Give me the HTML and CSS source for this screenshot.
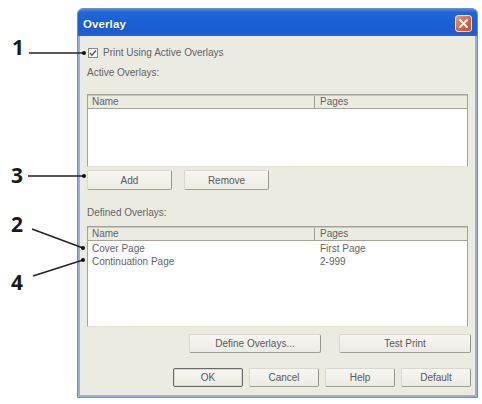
FILE: index.html
```html
<!DOCTYPE html>
<html>
<head>
<meta charset="utf-8">
<link rel="stylesheet" href="styles.css">
</head>
<body>
<svg class="callouts" width="92" height="404" viewBox="0 0 92 404">
  <g class="callout-text">
    <text x="12" y="55">1</text>
    <text x="11" y="183">3</text>
    <text x="11" y="232">2</text>
    <text x="11" y="290">4</text>
  </g>
  <g class="callout-lines">
    <line x1="29" y1="53" x2="84" y2="53"/>
    <line x1="28" y1="176" x2="84" y2="176"/>
    <line x1="32" y1="229" x2="83" y2="248"/>
    <line x1="33" y1="276" x2="83" y2="260"/>
  </g>
  <g class="callout-dots">
    <circle cx="84" cy="53" r="2"/>
    <circle cx="84" cy="176" r="2"/>
    <circle cx="83" cy="248" r="2"/>
    <circle cx="83" cy="260" r="2"/>
  </g>
</svg>

<div class="window">
  <div class="titlebar">
    <span class="title">Overlay</span>
    <span class="close">
      <svg width="15" height="15" viewBox="0 0 15 15"><path d="M4 4 L11 11 M11 4 L4 11" stroke="#fff" stroke-width="2" stroke-linecap="round"/></svg>
    </span>
  </div>
  <div class="client">
    <div class="check-row">
      <span class="checkbox"><svg width="8" height="8" viewBox="0 0 8 8"><path d="M1 4 L3 6.2 L7 1.5" fill="none" stroke="#555" stroke-width="1.4"/></svg></span>
      <span class="check-label">Print Using Active Overlays</span>
    </div>
    <div class="label label-active">Active Overlays:</div>
    <div class="list list-active">
      <div class="list-head">
        <div class="col-name">Name</div>
        <div class="col-pages">Pages</div>
      </div>
    </div>
    <div class="btn-row row-add">
      <div class="btn btn-wide">Add</div>
      <div class="btn btn-wide">Remove</div>
    </div>
    <div class="label label-defined">Defined Overlays:</div>
    <div class="list list-defined">
      <div class="list-head">
        <div class="col-name">Name</div>
        <div class="col-pages">Pages</div>
      </div>
      <div class="list-row">
        <div class="col-name">Cover Page</div>
        <div class="col-pages">First Page</div>
      </div>
      <div class="list-row">
        <div class="col-name">Continuation Page</div>
        <div class="col-pages">2-999</div>
      </div>
    </div>
    <div class="btn-row row-define">
      <div class="btn btn-long">Define Overlays...</div>
      <div class="btn btn-long">Test Print</div>
    </div>
    <div class="btn-row row-dialog">
      <div class="btn btn-std btn-default">OK</div>
      <div class="btn btn-std">Cancel</div>
      <div class="btn btn-std">Help</div>
      <div class="btn btn-std">Default</div>
    </div>
  </div>
</div>
</body>
</html>
```

FILE: styles.css
```css
html, body {
  margin: 0;
  padding: 0;
  background: #ffffff;
}
body {
  width: 482px;
  height: 404px;
  position: relative;
  overflow: hidden;
  font-family: "Liberation Sans", Arial, sans-serif;
  font-size: 10px;
  color: #646464;
}

.callouts {
  position: absolute;
  left: 0;
  top: 0;
  z-index: 2;
}
.callout-text text {
  font-family: "Open Sans", "DejaVu Sans", sans-serif;
  font-weight: 700;
  font-size: 21px;
  fill: #1a1a1a;
}
.callout-lines line {
  stroke: #222;
  stroke-width: 1.5;
}
.callout-dots circle {
  fill: #111;
}

.window {
  margin: 8px 0 0 77px;
  width: 401px;
  height: 390px;
  box-sizing: border-box;
  background: #8fb1e0;
  border: 1px solid #6d8fc4;
  border-radius: 6px 6px 0 0;
  display: flex;
  flex-direction: column;
}

.titlebar {
  height: 27px;
  flex: none;
  display: flex;
  align-items: center;
  justify-content: space-between;
  padding: 1px 5px 0 5px;
  box-sizing: border-box;
  background: linear-gradient(#4a8ae8 0%, #2166d8 12%, #1a5fd6 50%, #1c5cd0 85%, #2a62c8 100%);
  border-radius: 5px 5px 0 0;
}
.title {
  color: #fff;
  font-weight: 700;
  font-size: 11.5px;
  padding-top: 2px;
  letter-spacing: 0.1px;
  text-shadow: 0 0 1px rgba(10, 40, 120, 0.6);
}
.close {
  width: 17px;
  height: 17px;
  box-sizing: border-box;
  border: 1px solid #f3e6df;
  border-radius: 3px;
  background: linear-gradient(135deg, #ec9a78, #d8643e 55%, #c4502e);
  display: flex;
  align-items: center;
  justify-content: center;
  margin-top: 1px;
}

.client {
  flex: 1;
  margin: 0 2px 2px 2px;
  background: #ecebe2;
  padding: 0 4px 0 7px;
  display: flex;
  flex-direction: column;
}

.check-row {
  margin-top: 10px;
  height: 13px;
  display: flex;
  align-items: center;
  gap: 5px;
  padding-left: 1px;
}
.checkbox {
  width: 10px;
  height: 10px;
  box-sizing: border-box;
  border: 1px solid #888;
  background: #f8f8f4;
  display: flex;
  align-items: center;
  justify-content: center;
}

.label {
  height: 13px;
  line-height: 13px;
}
.label-active { margin-top: 7px; }
.label-defined { margin-top: 16px; }

.list {
  width: 381px;
  box-sizing: border-box;
  border: 1px solid #a2a29a;
  border-bottom-color: #e4e3da;
  background: #ffffff;
  display: flex;
  flex-direction: column;
}
.list-active {
  margin-top: 15px;
  height: 73px;
}
.list-defined {
  margin-top: 7px;
  height: 101px;
}
.list-head {
  height: 14px;
  box-sizing: border-box;
  display: flex;
  background: #ecebe0;
  border-bottom: 1px solid #a4a398;
  border-top: 1px solid #c8c7bc;
  line-height: 12px;
}
.list-head .col-name {
  border-right: 1px solid #9f9e94;
}
.col-name {
  width: 227px;
  box-sizing: border-box;
  padding-left: 4px;
  flex: none;
}
.col-pages {
  flex: 1;
  padding-left: 5px;
}
.list-row {
  display: flex;
  height: 13px;
  line-height: 13px;
}
.list-head + .list-row { margin-top: 1px; }

.btn-row {
  display: flex;
}
.row-add {
  margin-top: 3px;
  gap: 12px;
}
.row-define {
  margin-top: 7px;
  justify-content: flex-end;
  gap: 18px;
}
.row-dialog {
  margin-top: 15px;
  justify-content: flex-end;
  gap: 6px;
}

.btn {
  box-sizing: border-box;
  display: flex;
  align-items: center;
  justify-content: center;
  background: linear-gradient(#f7f6f1, #ecebe3);
  border: 1px solid #dad8ce;
  border-right-color: #96958e;
  border-bottom-color: #a09f96;
  border-radius: 2px;
  color: #5a5a5a;
}
.btn-wide {
  width: 85px;
  height: 20px;
}
.btn-long {
  width: 132px;
  height: 19px;
}
.btn-std {
  width: 70px;
  height: 19px;
}
.btn-default {
  border: 1px solid #6a6a66;
  box-shadow: inset 0 0 0 1px #d8d7cf;
}
```
